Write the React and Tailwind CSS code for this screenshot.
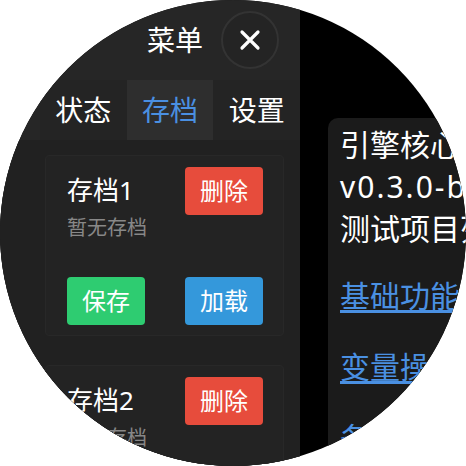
import React from "react";

const font = { fontFamily: '"Noto Sans", "Noto Sans CJK SC", sans-serif' };

function SaveCard({ n }) {
  return (
    <div className="bg-[#232323] border border-[#282828] rounded-[4px] pt-[11px] pb-[10px] pl-[21px] pr-[20px] shrink-0">
      <div className="flex items-start justify-between">
        <div className="flex flex-col pt-[5px]">
          <div className="text-[26px] leading-[36px] text-white">存档{n}</div>
          <div className="mt-[5px] text-[20px] leading-[30px] text-[#888888]">暂无存档</div>
        </div>
        <button className="w-[78px] h-[48px] rounded-[4px] bg-[#e74c3c] text-white text-[24px] leading-none flex items-center justify-center">
          删除
        </button>
      </div>
      <div className="mt-[34px] flex items-center justify-between">
        <button className="w-[78px] h-[48px] rounded-[4px] bg-[#2ecc71] text-white text-[24px] leading-none flex items-center justify-center">
          保存
        </button>
        <button className="w-[78px] h-[48px] rounded-[4px] bg-[#3498db] text-white text-[24px] leading-none flex items-center justify-center">
          加载
        </button>
      </div>
    </div>
  );
}

export default function App() {
  return (
    <div className="w-[466px] h-[466px] bg-white" style={font}>
      <div className="w-[466px] h-[466px] rounded-full overflow-hidden bg-black flex">
        <div className="w-[300px] h-full bg-[#262626] flex flex-col shrink-0">
          <div className="h-[80px] flex items-center justify-end gap-[18px] pr-[21px] shrink-0">
            <span className="text-[28px] leading-none text-white">菜单</span>
            <button className="w-[58px] h-[58px] rounded-full border-2 border-[#333333] bg-[#242424] flex items-center justify-center">
              <svg width="22" height="22" viewBox="0 0 22 22">
                <path d="M3 3 L19 19 M19 3 L3 19" stroke="white" strokeWidth="3.2" strokeLinecap="round" />
              </svg>
            </button>
          </div>
          <div className="ml-[40px] h-[60px] grid grid-cols-3 bg-[#242424] shrink-0">
            <div className="flex items-center justify-center text-[28px] text-white">状态</div>
            <div className="flex items-center justify-center text-[28px] text-[#4a90e2] bg-[#2e2e2e]">存档</div>
            <div className="flex items-center justify-center text-[28px] text-white">设置</div>
          </div>
          <div className="flex-1 bg-[#212121] pt-[15px] pl-[45px] pr-[16px] flex flex-col gap-[29px] overflow-hidden">
            <SaveCard n={1} />
            <SaveCard n={2} />
          </div>
        </div>
        <div className="flex-1 pt-[118px] pl-[28px] overflow-hidden">
          <div className="w-[200px] h-[400px] bg-[#1b1b1b] rounded-[10px] pt-[6px] pl-[12px] text-[30px] leading-[42px] whitespace-nowrap">
            <div className="text-white">引擎核心演示</div>
            <div className="text-white tracking-[2px]">v0.3.0-beta</div>
            <div className="text-white">测试项目列表</div>
            <div className="mt-[25px] text-[#4a90e2] underline underline-offset-[3px]">基础功能测试</div>
            <div className="mt-[29px] text-[#4a90e2] underline underline-offset-[3px]">变量操作测试</div>
            <div className="mt-[29px] text-[#4a90e2] underline underline-offset-[3px]">条件分支测试</div>
          </div>
        </div>
      </div>
    </div>
  );
}
